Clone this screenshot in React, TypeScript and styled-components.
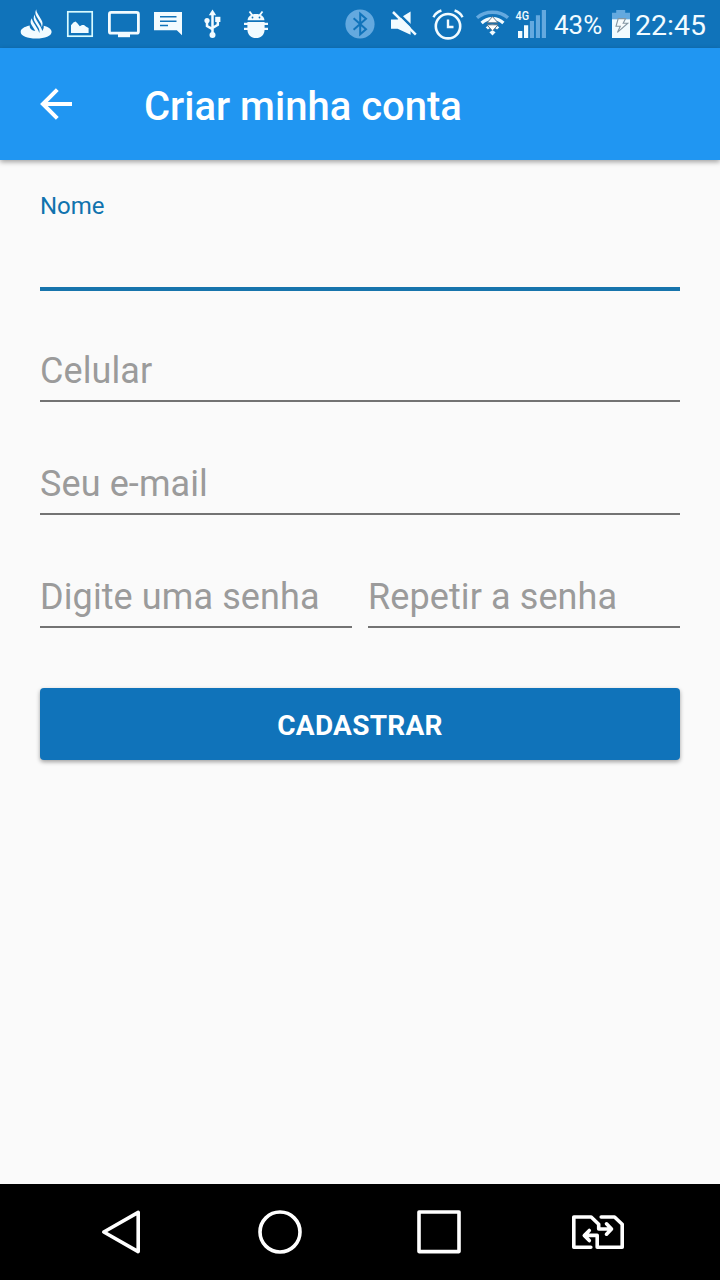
import React from 'react';
import styled, { createGlobalStyle } from 'styled-components';

const GlobalStyle = createGlobalStyle`
  *, *::before, *::after { box-sizing: border-box; }
  html, body { margin: 0; padding: 0; }
  body { background: #fafafa; font-family: Roboto, 'Liberation Sans', sans-serif; }
`;

const Screen = styled.div`
  width: 720px;
  height: 1280px;
  display: flex;
  flex-direction: column;
  background: #fafafa;
  overflow: hidden;
`;

const StatusBar = styled.header`
  height: 48px;
  flex: none;
  display: flex;
  align-items: center;
  justify-content: space-between;
  padding: 0 14px;
  background: #1073ba;
  color: #f2fbff;
`;

const StatusGroup = styled.div`
  height: 48px;
  display: flex;
  align-items: center;
`;

const Icon = styled.svg`
  display: block;
  flex: none;
`;

const BatteryLevel = styled.span`
  width: 56px;
  padding: 2px 0 0 2px;
  font-size: 26px;
  line-height: 30px;
  white-space: nowrap;
`;

const Clock = styled.span`
  width: 72px;
  padding: 3px 0 0 1px;
  font-size: 28.5px;
  line-height: 32px;
  white-space: nowrap;
`;

const AppBar = styled.div`
  height: 112px;
  flex: none;
  display: flex;
  align-items: center;
  padding-left: 32px;
  background: #2096f2;
  box-shadow: 0 2px 5px rgba(0, 0, 0, 0.36);
`;

const BackButton = styled.button`
  width: 48px;
  height: 48px;
  padding: 0;
  border: 0;
  background: none;
`;

const Title = styled.h1`
  margin: 0 0 0 64px;
  padding-top: 6px;
  font-size: 40px;
  font-weight: 500;
  line-height: 48px;
  color: #fff;
`;

const Form = styled.form`
  flex: 1;
  padding: 28px 40px 0;
`;

const Field = styled.label<{ $active?: boolean }>`
  display: flex;
  flex: 1;
  height: ${p => (p.$active ? '103px' : '113px')};
  align-items: ${p => (p.$active ? 'flex-start' : 'flex-end')};
  padding: ${p => (p.$active ? '4px 0 0' : '0 0 8px')};
  border-bottom: ${p => (p.$active ? '4px solid #1774ac' : '2px solid #737373')};
  font-size: ${p => (p.$active ? '24px' : '36px')};
  line-height: ${p => (p.$active ? '28px' : '42px')};
  letter-spacing: ${p => (p.$active ? '0' : '0.1px')};
  color: ${p => (p.$active ? '#1073ae' : '#9b9b9b')};
  white-space: nowrap;
`;

const FieldStack = styled.div`
  display: flex;
  flex-direction: column;
  height: 226px;
  margin-top: -2px;
`;

const FieldRow = styled.div`
  display: flex;
  gap: 16px;
`;

const SubmitButton = styled.button`
  display: block;
  width: 100%;
  height: 72px;
  margin-top: 60px;
  padding: 3px 0 0;
  border: 0;
  border-radius: 4px;
  background: #1073ba;
  box-shadow: 0 2px 4px rgba(0, 0, 0, 0.36);
  font-family: inherit;
  font-size: 28px;
  font-weight: 700;
  line-height: 32px;
  letter-spacing: 0.25px;
  color: #fff;
`;

const NavBar = styled.nav`
  height: 96px;
  flex: none;
  display: flex;
  align-items: center;
  justify-content: space-between;
  padding: 0 82px;
  background: #000;
`;

const LIGHT = '#64a9df';
const BAR = '#1073ba';

function StatusIcon({ x, width = 44, children }: { x: number; width?: number; children: React.ReactNode }) {
  return (
    <Icon width={width} height={48} viewBox={`${x} 0 ${width} 48`} fill="#f2fbff">
      {children}
    </Icon>
  );
}

function NavIcon({ x, children }: { x: number; children: React.ReactNode }) {
  return (
    <Icon width={80} height={96} viewBox={`${x} 1184 80 96`} fill="none" stroke="#fff" strokeWidth={3.6} strokeLinejoin="round" strokeLinecap="round">
      {children}
    </Icon>
  );
}

export default function App() {
  return (
    <>
      <GlobalStyle />
      <Screen>
        <StatusBar>
          <StatusGroup>
            <StatusIcon x={14}>
              <path d="M29.7 25.6C23.8 26.9 20.7 29.2 20.7 31.9C20.7 35.8 27.4 38.5 36.2 38.5C45 38.5 51.6 35.7 51.6 31.9C51.6 29.2 48.5 27 43.7 25.8C44 28 43.4 29.2 42.2 31C41.9 28.8 40.8 27.2 39.5 25L36.8 20.5C35.4 18.2 34.6 16.3 35.1 14.3C33 17 33.3 19.4 35.2 22.5L38 27.1C39.3 29.3 39.8 30.8 39.3 33.1C38.9 31.4 38.2 30.1 37.2 28.4L34.8 24.5C33.4 22.2 32 20.4 31.9 18.2C30 20.7 30.3 23 31.9 25.6L35.3 31.1C32.2 30.8 29.4 28.7 29.7 25.6Z" />
              <path d="M36.3 9.3C34.8 12 35.3 14.2 36.6 16.4L40.4 22.7C41.3 24.2 41.6 25.5 41.7 27.2C43.1 24.5 42.7 22 41.3 19.7L37.9 14C36.9 12.4 36.3 11.1 36.3 9.3Z" />
            </StatusIcon>
            <StatusIcon x={58}>
              <rect x="67.8" y="11.8" width="24.4" height="24.4" fill="none" stroke="#d8fbff" strokeWidth="1.7" />
              <path d="M71 33V25.2L73.4 22.4L75.5 21.4L77.4 23.3L79.8 26.3L82 24.9H84L86.2 26.8L88.6 28V33Z" />
            </StatusIcon>
            <StatusIcon x={102}>
              <rect x="109.4" y="12.4" width="29" height="20.8" rx="1.8" fill="none" stroke="#f2fbff" strokeWidth="2.8" />
              <rect x="118" y="33" width="12" height="4.2" />
            </StatusIcon>
            <StatusIcon x={146}>
              <path d="M154 12H182V35.2L176.8 30.2H154Z" />
              <path d="M160 16.7H176.5M160 21.2H176.5M160 25.6H168" stroke={BAR} strokeWidth="1.5" />
            </StatusIcon>
            <StatusIcon x={190}>
              <path d="M212.5 9.4L216.2 15.2H208.8Z" />
              <path d="M212.5 14V35M207 21V26L212.5 29.2M217.8 20V24.8L212.5 28" fill="none" stroke="#f2fbff" strokeWidth="2.5" />
              <circle cx="207" cy="20.6" r="2.6" />
              <rect x="215.2" y="16.8" width="5.2" height="5.2" />
              <circle cx="212.5" cy="35" r="3" />
            </StatusIcon>
            <StatusIcon x={234}>
              <path d="M247.6 20.3C247.6 16.6 251 14 256 14S264.4 16.6 264.4 20.3Z" />
              <path d="M249.5 11.5L252.4 15.4M262.5 11.5L259.6 15.4" stroke="#f2fbff" strokeWidth="1.8" />
              <circle cx="252.5" cy="17.5" r=".9" fill={BAR} />
              <circle cx="259.5" cy="17.5" r=".9" fill={BAR} />
              <path d="M247.4 22H264.6V29.4C264.6 34.4 261 38 256 38S247.4 34.4 247.4 29.4Z" />
              <path d="M244 23.9H268M244 28.9H268" stroke="#f2fbff" strokeWidth="2.4" />
            </StatusIcon>
          </StatusGroup>
          <StatusGroup>
            <StatusIcon x={338}>
              <circle cx="360" cy="24" r="14.6" fill={LIGHT} />
              <path d="M353.6 18.3L366 29.2L360.2 34.3V13.7L366 18.8L353.6 29.7" fill="none" stroke={BAR} strokeWidth="2" />
            </StatusIcon>
            <StatusIcon x={382}>
              <path d="M391 19.4H397.6L410.6 11.4V34.8L397.6 28.7H391Z" />
              <path d="M395.3 10.4L418.3 33.2" stroke={BAR} strokeWidth="2.6" />
              <path d="M393 12L415.8 34.6" stroke="#f2fbff" strokeWidth="2.5" />
            </StatusIcon>
            <StatusIcon x={426}>
              <circle cx="448" cy="26.2" r="12.2" fill="none" stroke="#f2fbff" strokeWidth="2.6" />
              <path d="M448 19.5V27H453.5M433.5 17.2C434.8 14.2 437 12 441.4 10.5M462.5 17.2C461.2 14.2 459 12 454.6 10.5" fill="none" stroke="#f2fbff" strokeWidth="2.4" />
            </StatusIcon>
            <StatusIcon x={470}>
              <path d="M477 17.8C485.5 10.4 499.5 10.4 508 17.8" fill="none" stroke={LIGHT} strokeWidth="3.3" />
              <path d="M481.6 23C487.6 17.2 497.4 17.2 503.4 23M486.8 28.3C490 25.2 495 25.2 498.2 28.3" fill="none" stroke="#f2fbff" strokeWidth="3.2" />
              <path d="M492.5 16.6L498 22.8H487ZM492.5 31L498 24.8H487Z" fill="#fff" stroke="#536b7d" strokeWidth="0.9" />
              <path d="M489.4 32.2L492.5 30.2L495.6 32.2L492.5 35.6Z" />
            </StatusIcon>
            <StatusIcon x={514} width={38}>
              <text x="515.5" y="20" fontFamily="Roboto, sans-serif" fontSize="12.5" fontWeight="500" textLength="13.5" lengthAdjust="spacingAndGlyphs">4G</text>
              <path d="M518 31H522.3V38H518ZM524 25.3H528.2V38H524Z" />
              <path d="M529.9 21H534V38H529.9ZM535.9 15.2H540V38H535.9ZM541.8 10H546V38H541.8Z" fill={LIGHT} />
            </StatusIcon>
            <BatteryLevel>43%</BatteryLevel>
            <StatusIcon x={608} width={26}>
              <path d="M612 12.7H616.2V10H625.2V12.7H630V20H612Z" fill={LIGHT} />
              <path d="M612 19.3H630V38H612Z" />
              <path d="M618.2 18.6H625.6L623.2 23.2H627.8L617.4 32.4L620.3 26.3H616Z" fill="#f7fbfc" stroke="#8496a3" strokeWidth="1.1" />
            </StatusIcon>
            <Clock>22:45</Clock>
          </StatusGroup>
        </StatusBar>
        <AppBar>
          <BackButton type="button" aria-label="Voltar">
            <Icon width={48} height={48} viewBox="32 80 48 48" fill="none" stroke="#fff" strokeWidth={4}>
              <path d="M72 104H43M57.3 89.6L42.9 104L57.3 118.4" />
            </Icon>
          </BackButton>
          <Title>Criar minha conta</Title>
        </AppBar>
        <Form>
          <Field $active>Nome</Field>
          <FieldStack>
            <Field>Celular</Field>
            <Field>Seu e-mail</Field>
          </FieldStack>
          <FieldRow>
            <Field>Digite uma senha</Field>
            <Field>Repetir a senha</Field>
          </FieldRow>
          <SubmitButton type="button">CADASTRAR</SubmitButton>
        </Form>
        <NavBar>
          <NavIcon x={82}>
            <path d="M103.8 1232L138.2 1212.4V1251.6Z" />
          </NavIcon>
          <NavIcon x={241}>
            <circle cx="280" cy="1232" r="20" />
          </NavIcon>
          <NavIcon x={399}>
            <path d="M419 1212H459V1251.6H419Z" />
          </NavIcon>
          <NavIcon x={558}>
            <path d="M590.8 1247.2H573.8V1217H591.2L598.7 1224.2V1229H611M606.5 1223.8L611.5 1229L606.5 1234.2M601.2 1217H614.5L622.2 1224.3V1247.2H597.2V1235.4H585M589.3 1230.4L584.3 1235.4L589.3 1240.6" />
          </NavIcon>
        </NavBar>
      </Screen>
    </>
  );
}
